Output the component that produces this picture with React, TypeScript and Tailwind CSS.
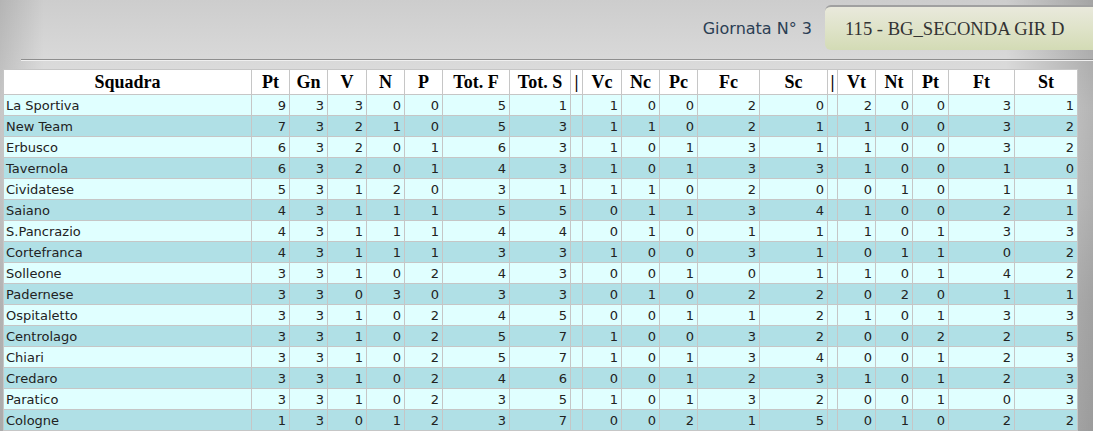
import React from "react";

type Row = [string, ...number[]];

const rows: Row[] = [
  ["La Sportiva", 9, 3, 3, 0, 0, 5, 1, 1, 0, 0, 2, 0, 2, 0, 0, 3, 1],
  ["New Team", 7, 3, 2, 1, 0, 5, 3, 1, 1, 0, 2, 1, 1, 0, 0, 3, 2],
  ["Erbusco", 6, 3, 2, 0, 1, 6, 3, 1, 0, 1, 3, 1, 1, 0, 0, 3, 2],
  ["Tavernola", 6, 3, 2, 0, 1, 4, 3, 1, 0, 1, 3, 3, 1, 0, 0, 1, 0],
  ["Cividatese", 5, 3, 1, 2, 0, 3, 1, 1, 1, 0, 2, 0, 0, 1, 0, 1, 1],
  ["Saiano", 4, 3, 1, 1, 1, 5, 5, 0, 1, 1, 3, 4, 1, 0, 0, 2, 1],
  ["S.Pancrazio", 4, 3, 1, 1, 1, 4, 4, 0, 1, 0, 1, 1, 1, 0, 1, 3, 3],
  ["Cortefranca", 4, 3, 1, 1, 1, 3, 3, 1, 0, 0, 3, 1, 0, 1, 1, 0, 2],
  ["Solleone", 3, 3, 1, 0, 2, 4, 3, 0, 0, 1, 0, 1, 1, 0, 1, 4, 2],
  ["Padernese", 3, 3, 0, 3, 0, 3, 3, 0, 1, 0, 2, 2, 0, 2, 0, 1, 1],
  ["Ospitaletto", 3, 3, 1, 0, 2, 4, 5, 0, 0, 1, 1, 2, 1, 0, 1, 3, 3],
  ["Centrolago", 3, 3, 1, 0, 2, 5, 7, 1, 0, 0, 3, 2, 0, 0, 2, 2, 5],
  ["Chiari", 3, 3, 1, 0, 2, 5, 7, 1, 0, 1, 3, 4, 0, 0, 1, 2, 3],
  ["Credaro", 3, 3, 1, 0, 2, 4, 6, 0, 0, 1, 2, 3, 1, 0, 1, 2, 3],
  ["Paratico", 3, 3, 1, 0, 2, 3, 5, 1, 0, 1, 3, 2, 0, 0, 1, 0, 3],
  ["Cologne", 1, 3, 0, 1, 2, 3, 7, 0, 0, 2, 1, 5, 0, 1, 0, 2, 2],
];

const headers = [
  "Squadra", "Pt", "Gn", "V", "N", "P", "Tot. F", "Tot. S", "|",
  "Vc", "Nc", "Pc", "Fc", "Sc", "|", "Vt", "Nt", "Pt", "Ft", "St",
];

const widths = [248, 38, 38, 39, 38, 38, 67, 61, 12, 39, 38, 38, 62, 68, 10, 38, 37, 36, 66, 63];

export default function App() {
  return (
    <div className="w-[1093px] h-[431px] overflow-hidden bg-[linear-gradient(90deg,rgba(0,0,0,0.12)_0%,rgba(0,0,0,0)_4%,rgba(0,0,0,0)_92%,rgba(0,0,0,0.2)_100%),linear-gradient(180deg,#cdcdcd_0%,#e2e2e2_25%,#dcdcdc_45%,#cacaca_70%,#c2c2c2_100%)]">
      <div className="flex justify-end items-start h-[59px] pt-[5px]">
        <span
          className="text-[16px] leading-[45px] text-[#2b3e54] mr-[13px] mt-[1px]"
          style={{ fontFamily: '"DejaVu Sans", Verdana, sans-serif' }}
        >
          Giornata N° 3
        </span>
        <div
          className="h-[45px] w-[268px] rounded-l-[6px] border-t-2 border-[#a0a0a0] bg-[linear-gradient(180deg,#e9e9dc_0%,#dfe3c9_50%,#d3dbb5_100%)] flex items-center pl-[20px] text-[18.6px] text-[#333]"
          style={{ fontFamily: '"Liberation Serif", "Times New Roman", serif' }}
        >
          115 - BG_SECONDA GIR D
        </div>
      </div>
      <div className="ml-[21px] h-[2px] border-t border-[#8e8e8e] bg-[#efefef]" />
      <table
        className="ml-[3px] mt-[8px] table-fixed border-collapse w-[1074px]"
        style={{ fontFamily: '"DejaVu Sans", Verdana, sans-serif' }}
      >
        <colgroup>
          {widths.map((w, i) => (
            <col key={i} style={{ width: w }} />
          ))}
        </colgroup>
        <thead>
          <tr className="h-[25px] bg-white">
            {headers.map((h, i) => (
              <th
                key={i}
                className="border border-[#c6c6c6] p-0 text-center text-[18px] font-bold text-black leading-none whitespace-nowrap"
                style={{ fontFamily: '"Liberation Serif", "Times New Roman", serif' }}
              >
                {h}
              </th>
            ))}
          </tr>
        </thead>
        <tbody>
          {rows.map((r, ri) => {
            const nums = r.slice(1) as number[];
            const cells: (number | string)[] = [
              ...nums.slice(0, 7),
              "",
              ...nums.slice(7, 12),
              "",
              ...nums.slice(12),
            ];
            return (
              <tr key={ri} className={`h-[21px] ${ri % 2 === 0 ? "bg-[#e0ffff]" : "bg-[#b0e0e6]"}`}>
                <td className="border border-[#c6c6c6] pl-[2px] py-0 text-[13px] text-[#222] leading-none whitespace-nowrap">
                  {r[0]}
                </td>
                {cells.map((c, ci) => (
                  <td
                    key={ci}
                    className="border border-[#c6c6c6] pr-[3px] py-0 text-right text-[13px] text-[#222] leading-none"
                  >
                    {c}
                  </td>
                ))}
              </tr>
            );
          })}
        </tbody>
      </table>
    </div>
  );
}
